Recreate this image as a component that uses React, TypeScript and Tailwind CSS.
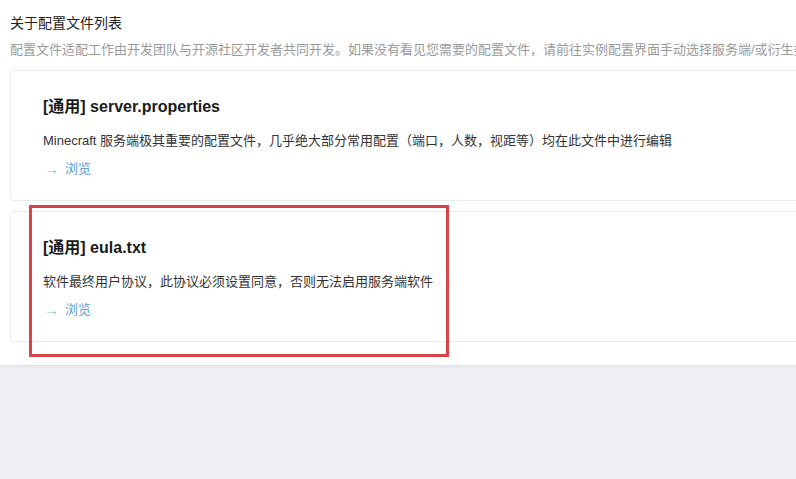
const font = { fontFamily: '"Liberation Sans", "Noto Sans CJK SC", sans-serif' };

type ConfigFile = {
  name: string;
  desc: string;
};

const files: ConfigFile[] = [
  {
    name: "server.properties",
    desc: "Minecraft 服务端极其重要的配置文件，几乎绝大部分常用配置（端口，人数，视距等）均在此文件中进行编辑",
  },
  {
    name: "eula.txt",
    desc: "软件最终用户协议，此协议必须设置同意，否则无法启用服务端软件",
  },
];

const FileCard = ({ file }: { file: ConfigFile }) => (
  <div className="border border-[#ebebeb] rounded-[4px] pl-[32px] pt-[24px] pb-[21px]">
    <div className="h-6 leading-6 text-[16px] font-bold text-[#1a1a1a]">
      [通用] {file.name}
    </div>
    <div className="mt-[12px] h-5 leading-5 text-[13px] text-[#333]">{file.desc}</div>
    <div className="mt-[8px] h-5 leading-5 text-[13px] text-[#5c9dd6] cursor-pointer flex items-center">
      <span className="pl-[1px] text-[15px] text-[#8bb8e0]">→</span>
      <span className="ml-[6px]">浏览</span>
    </div>
  </div>
);

export default function App() {
  return (
    <div className="relative w-[796px] h-[479px] overflow-hidden bg-[#eef0f3]" style={font}>
      <div className="w-[1100px] bg-white shadow-[0_1px_4px_rgba(0,0,0,0.08)] px-[10px] pt-[13px] pb-[23px]">
        <div className="h-5 leading-5 text-[14px] text-[#222]">关于配置文件列表</div>
        <div className="mt-[7px] h-5 leading-5 text-[13px] text-[#9a9a9a] whitespace-nowrap">
          配置文件适配工作由开发团队与开源社区开发者共同开发。如果没有看见您需要的配置文件，请前往实例配置界面手动选择服务端/或衍生类型
        </div>
        <div className="mt-[10px] flex flex-col gap-[10px]">
          {files.map((f) => (
            <FileCard key={f.name} file={f} />
          ))}
        </div>
      </div>
      <div className="absolute left-[29px] top-[205px] w-[420px] h-[152px] border-[3px] border-[#d9434a] pointer-events-none" />
    </div>
  );
}
